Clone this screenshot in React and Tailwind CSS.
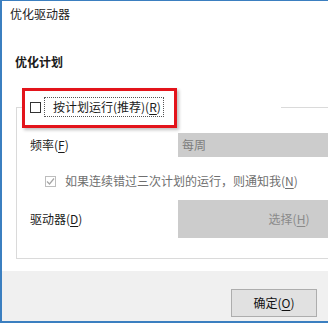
import React from "react";

const Mn = ({ children }) => <span className="underline underline-offset-2">{children}</span>;

const App = () => {
  return (
    <div className="relative w-[328px] h-[323px] overflow-hidden bg-white border-t border-l-2 border-b-2 border-[#3b7fc0] font-['Noto_Sans_CJK_SC',sans-serif] text-[12px] leading-[16px] text-[#1a1a1a] flex flex-col">
      {/* title */}
      <div className="pl-[8px] pt-[5px] text-[#222]">优化驱动器</div>

      <div className="mt-[32px] pl-[13px] font-bold">优化计划</div>

      {/* group box */}
      <fieldset className="mt-[27px] ml-[14px] w-[340px] border border-[#dadada] pb-[20px]">
        <legend className="ml-[5px] w-[259px] flex items-center pl-[8px]">
          <span className="w-[11px] h-[11px] border border-[#333] bg-white"></span>
          <span className="ml-[3px] h-[20px] flex items-center pl-[8px] pr-[2px] border border-dotted border-[#555]">
            按计划运行(推荐)(<Mn>R</Mn>)
          </span>
        </legend>

        <div className="mt-[16px] flex items-center">
          <span className="pl-[13px] w-[161px]">频率(<Mn>F</Mn>)</span>
          <div className="h-[24px] flex-1 bg-[#cccccc] flex items-center pl-[4px] text-[#7d7d7d]">每周</div>
        </div>

        <div className="mt-[16px] flex items-center pl-[28px] text-[#6f6f6f]">
          <span className="w-[11px] h-[11px] border border-[#bdbdbd] flex items-center justify-center">
            <svg width="9" height="9" viewBox="0 0 9 9">
              <path d="M1 4.5 L3.5 7 L8 1.5" fill="none" stroke="#a6a6a6" strokeWidth="1.2" />
            </svg>
          </span>
          <span className="ml-[9px]">如果连续错过三次计划的运行，则通知我(<Mn>N</Mn>)</span>
        </div>

        <div className="mt-[11px] flex items-center">
          <span className="pl-[13px] w-[161px]">驱动器(<Mn>D</Mn>)</span>
          <div className="h-[38px] w-[222px] bg-[#cccccc] flex items-center justify-center text-[#8a8a8a]">
            选择(<Mn>H</Mn>)
          </div>
        </div>
      </fieldset>

      {/* footer */}
      <div className="mt-[12px] flex-1 bg-[#f0f0f0] flex justify-end items-start pr-[11px]">
        <button className="mt-[18px] w-[86px] h-[28px] border border-[#adadad] bg-[#e1e1e1] text-[#111]">
          确定(<Mn>O</Mn>)
        </button>
      </div>

      {/* red annotation */}
      <div className="absolute left-[20px] top-[87px] w-[155px] h-[40px] border-[3px] border-[#e3141b] shadow-[2px_2px_3px_rgba(0,0,0,0.25)]"></div>
    </div>
  );
};

export default App;
